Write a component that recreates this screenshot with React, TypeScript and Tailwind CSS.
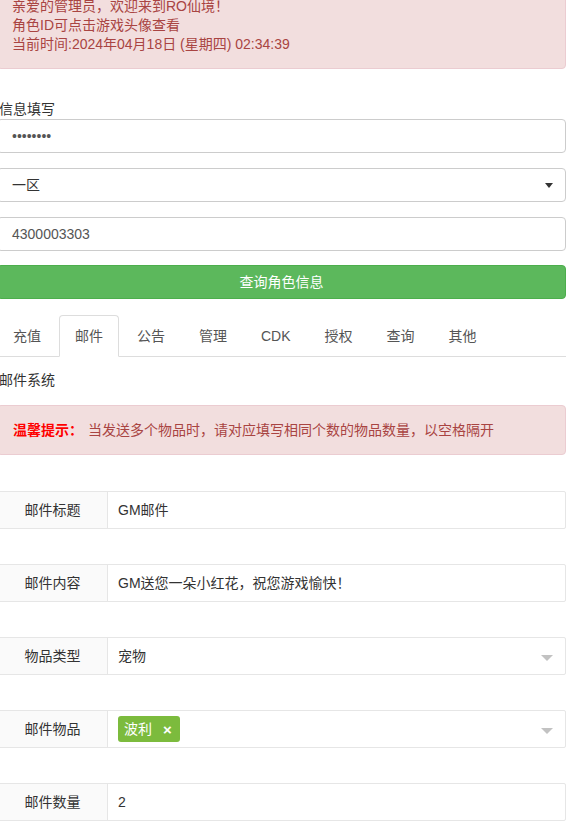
import { ReactNode } from 'react';

const tabs = ['充值', '邮件', '公告', '管理', 'CDK', '授权', '查询', '其他'];

const Caret = () => (
    <span className="ml-auto mr-[12px] w-0 h-0 border-x-[6px] border-x-transparent border-t-[6px] border-t-[#c2c2c2] mt-[3px]" />
);

const FormRow = ({ label, children }: { label: string; children: ReactNode }) => (
    <div className="flex h-[38px] border border-[#e6e6e6] rounded-[2px] mt-[35px] first:mt-0">
        <div className="w-[110px] shrink-0 bg-[#fafafa] border-r border-[#e6e6e6] text-center leading-[36px] text-[#333]">
            {label}
        </div>
        <div className="flex-1 flex items-center pl-[10px] text-[#333]">{children}</div>
    </div>
);

export default function App() {
    return (
        <div className="w-[580px] h-[840px] overflow-hidden bg-white text-[14px] text-[#333] font-['Liberation_Sans','Noto_Sans_CJK_SC',sans-serif]">
            <div className="ml-[-3px] mr-[14px]">
                {/* welcome alert */}
                <div className="mt-[-18px] border border-[#ebccd1] bg-[#f2dede] text-[#a94442] rounded-[4px] px-[14px] py-[14px] leading-[19px]">
                    <div>亲爱的管理员，欢迎来到RO仙境！</div>
                    <div>角色ID可点击游戏头像查看</div>
                    <div>当前时间:2024年04月18日 (星期四) 02:34:39</div>
                </div>

                <div className="mt-[30px] pl-[2px] leading-[20px]">信息填写</div>

                <div className="flex flex-col gap-[15px]">
                    <div className="h-[34px] border border-[#ccc] rounded-[4px] pl-[14px] flex items-center text-[#555] text-[14px]">
                        ••••••••
                    </div>
                    <div className="h-[34px] border border-[#ccc] rounded-[4px] pl-[14px] flex items-center text-[#333]">
                        一区
                        <span className="ml-auto mr-[12px] w-0 h-0 border-x-[4px] border-x-transparent border-t-[5px] border-t-[#333]" />
                    </div>
                    <div className="h-[34px] border border-[#ccc] rounded-[4px] pl-[14px] flex items-center text-[#555]">
                        4300003303
                    </div>
                </div>

                <button className="mt-[14px] w-full h-[34px] bg-[#5cb85c] border border-[#4cae4c] rounded-[4px] text-white">
                    查询角色信息
                </button>

                {/* tabs */}
                <div className="mt-[16px] flex border-b border-[#ddd]">
                    {tabs.map((t, i) => (
                        <div
                            key={t}
                            className={
                                i === 1
                                    ? 'mr-[2px] -mb-px px-[15px] py-[10px] leading-[20px] border border-[#ddd] border-b-white bg-white rounded-t-[4px] text-[#555]'
                                    : 'mr-[2px] -mb-px px-[15px] py-[10px] leading-[20px] border border-transparent text-[#555]'
                            }
                        >
                            {t}
                        </div>
                    ))}
                </div>

                <div className="mt-[13px] pl-[2px] leading-[20px]">邮件系统</div>

                <div className="mt-[15px] border border-[#ebccd1] bg-[#f2dede] text-[#a94442] rounded-[4px] px-[15px] py-[14px] leading-[20px]">
                    <span className="text-[#ff0000] font-bold">温馨提示：</span>
                    <span className="ml-[5px]">当发送多个物品时，请对应填写相同个数的物品数量，以空格隔开</span>
                </div>

                <div className="mt-[36px]">
                    <FormRow label="邮件标题">GM邮件</FormRow>
                    <FormRow label="邮件内容">GM送您一朵小红花，祝您游戏愉快！</FormRow>
                    <FormRow label="物品类型">
                        宠物
                        <Caret />
                    </FormRow>
                    <FormRow label="邮件物品">
                        <span className="h-[26px] flex items-center bg-[#7cbb3d] text-white rounded-[3px] pl-[6px] pr-[8px]">
                            波利
                            <span className="ml-[11px] font-bold text-[15px] leading-none">×</span>
                        </span>
                        <Caret />
                    </FormRow>
                    <FormRow label="邮件数量">2</FormRow>
                </div>
            </div>
        </div>
    );
}
